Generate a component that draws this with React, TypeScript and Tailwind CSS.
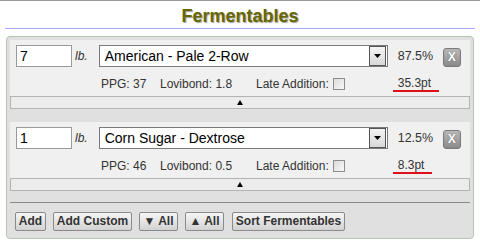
import React from "react";

function DownArrowBox() {
  return (
    <div className="w-[17px] h-[20px] border border-[#555] bg-gradient-to-b from-[#f4f4f4] to-[#d8d8d8] flex items-center justify-center">
      <svg width="7" height="4" viewBox="0 0 7 4">
        <path d="M0 0 L7 0 L3.5 4 Z" fill="#000" />
      </svg>
    </div>
  );
}

function Row({
  amount,
  name,
  pct,
  ppg,
  lov,
  pts,
}: {
  amount: string;
  name: string;
  pct: string;
  ppg: string;
  lov: string;
  pts: string;
}) {
  return (
    <div>
      <div className="bg-[#f0f0f0] h-[56px] pt-[5px]">
        <div className="flex items-center h-[22px]">
          <div className="ml-[6px] w-[56px] h-[22px] border border-[#9a9a9a] bg-white text-[14px] leading-[20px] pl-[3px] text-black">
            {amount}
          </div>
          <span className="ml-[3px] text-[12px] italic text-[#333]">lb.</span>
          <div className="ml-[11px] w-[289px] h-[22px] border border-[#7a7a7a] bg-white flex items-center justify-between pr-[1px]">
            <span className="pl-[5px] text-[14px] text-black leading-[20px]">{name}</span>
            <DownArrowBox />
          </div>
          <span className="ml-[10px] w-[45px] text-[12.5px] text-[#333]">{pct}</span>
          <div className="w-[18px] h-[19px] mt-[2px] rounded-[3px] border border-[#7a7a7a] bg-gradient-to-b from-[#b8b8b8] to-[#8a8a8a] flex items-center justify-center text-white font-bold text-[12px] leading-none [text-shadow:0_0_1px_#555]">
            X
          </div>
        </div>
        <div className="flex items-center h-[16px] mt-[9px] pl-[91px] text-[12px] leading-[16px] text-[#333]">
          <span className="w-[59px]">PPG: {ppg}</span>
          <span className="w-[96px]">Lovibond: {lov}</span>
          <span>Late Addition:</span>
          <span className="ml-[4px] w-[12px] h-[12px] border border-[#8c8c8c] bg-gradient-to-br from-[#dcdcdc] to-[#f8f8f8]" />
          <span className="ml-[48px] h-[16px] pl-[5px] pr-[8px] leading-[14px] border-b-2 border-[#e0101a]">
            {pts}
          </span>
        </div>
      </div>
      <div className="h-[13px] border border-[#b4b4b4] bg-[#ececec] flex items-center justify-center">
        <svg width="6" height="5" viewBox="0 0 6 5">
          <path d="M3 0 L6 5 L0 5 Z" fill="#000" />
        </svg>
      </div>
    </div>
  );
}

function Btn({ children, w }: { children: React.ReactNode; w: string }) {
  return (
    <button
      className={`${w} h-[19px] border border-[#8a8a8a] rounded-[2px] bg-gradient-to-b from-[#f6f6f6] to-[#d2d2d2] text-[12px] font-bold text-[#333] leading-[17px] text-center whitespace-nowrap`}
    >
      {children}
    </button>
  );
}

export default function App() {
  return (
    <div className="w-[480px] h-[249px] bg-white border-t border-[#999] font-['Liberation_Sans',Arial,sans-serif] text-[#333]">
      <h2 className="pt-[4px] h-[27px] text-center text-[18px] leading-[22px] font-bold text-[#666600] [text-shadow:1px_1px_1px_#a0a0a0]">
        Fermentables
      </h2>
      <div className="mx-[5px] h-px bg-[#a8a8ff]" />
      <div className="ml-[6px] mt-[7px] w-[468px] border border-[#b3c5b3] rounded-[4px] bg-[#e0e0e0] px-[3px] pt-[3px] pb-[7px]">
        <Row amount="7" name="American - Pale 2-Row" pct="87.5%" ppg="37" lov="1.8" pts="35.3pt" />
        <div className="h-[13px]" />
        <Row amount="1" name="Corn Sugar - Dextrose" pct="12.5%" ppg="46" lov="0.5" pts="8.3pt" />
        <div className="mt-[11px] border-t border-[#888] pt-[9px] flex gap-[7px] pl-[5px]">
          <Btn w="w-[31px]">Add</Btn>
          <Btn w="w-[79px]">Add Custom</Btn>
          <Btn w="w-[39px]">▼ All</Btn>
          <Btn w="w-[39px]">▲ All</Btn>
          <Btn w="w-[113px] ml-[1px]">Sort Fermentables</Btn>
        </div>
      </div>
    </div>
  );
}
